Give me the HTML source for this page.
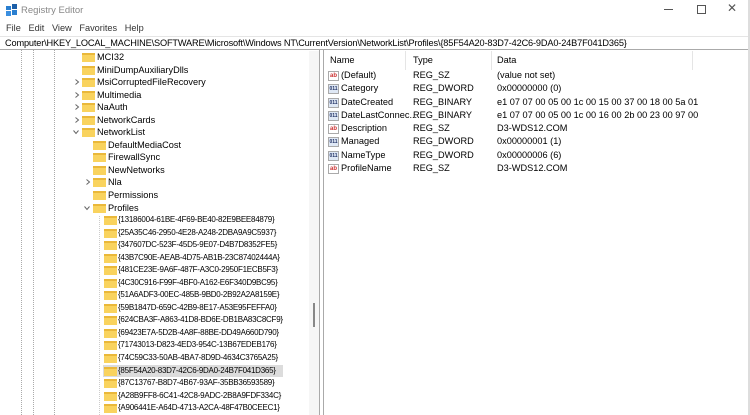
<!DOCTYPE html>
<html><head><meta charset="utf-8"><style>
*{margin:0;padding:0;box-sizing:border-box}
body{width:750px;height:415px;background:#fff;font-family:"Liberation Sans",sans-serif;font-size:9.2px;color:#000;position:relative;overflow:hidden}
.a{position:absolute;white-space:nowrap}
.r{position:absolute;height:12.5px;line-height:12.5px;white-space:nowrap}
.f{position:absolute;width:13px;height:9px;top:2px;background:#f9d35e;border-top:2px solid #eab83a}
.t{position:absolute}
.ar{position:absolute;top:3px}
.v{position:absolute;border-left:1px dotted #aaa;top:50px;height:365px}
.ic{position:absolute;width:11px;height:10px;font-size:6px;line-height:9px;text-align:center;border:1px solid #aaa;font-weight:bold}
.sz{color:#c33}.dw{color:#236;font-size:5px;background:#dfe8f5}
.g{font-size:8px;letter-spacing:-0.25px}
</style></head><body>
<div class="a" style="left:6px;top:4px;width:12px;height:12px">
<div style="position:absolute;left:0;top:2px;width:5px;height:4px;background:#2a7fd0"></div>
<div style="position:absolute;left:6px;top:0;width:5px;height:5px;background:#1c5fa8"></div>
<div style="position:absolute;left:0;top:7px;width:5px;height:5px;background:#3b8fe0"></div>
<div style="position:absolute;left:6px;top:6px;width:5px;height:5px;background:#2a7fd0"></div></div>
<div class="a" style="left:21px;top:5px;color:#888;font-size:9.5px">Registry Editor</div>
<div class="a" style="left:664px;top:9px;width:9px;border-top:1px solid #555"></div>
<div class="a" style="left:697px;top:5px;width:9px;height:9px;border:1px solid #555"></div>
<div class="a" style="left:727px;top:1px;color:#555;font-size:12px">✕</div>
<div class="a" style="left:6px;top:23px;color:#333;font-size:9.2px">File&nbsp;&nbsp;&nbsp;Edit&nbsp;&nbsp;&nbsp;View&nbsp;&nbsp;&nbsp;Favorites&nbsp;&nbsp;&nbsp;Help</div>
<div class="a" style="left:0;top:36px;width:750px;height:14px;border-top:1px solid #e5e5e5;border-bottom:1px solid #aaa"></div>
<div class="a" style="left:5px;top:38px;font-size:9.2px;letter-spacing:-0.15px">Computer\HKEY_LOCAL_MACHINE\SOFTWARE\Microsoft\Windows NT\CurrentVersion\NetworkList\Profiles\{85F54A20-83D7-42C6-9DA0-24B7F041D365}</div>
<div class="a" style="left:0;top:50px;width:320px;height:365px;border-right:1px solid #aaa"></div>
<div class="a" style="left:309px;top:51px;width:10px;height:364px;background:#f6f6f6"></div>
<div class="a" style="left:313px;top:303px;width:2px;height:24px;background:#888"></div>
<div class="a" style="left:323px;top:50px;width:427px;height:365px;border-left:1px solid #aaa;border-right:1px solid #aaa"></div>
<div class="a" style="left:748px;top:0;width:2px;height:415px;background:#ddd"></div>
<div class="v" style="left:21px"></div><div class="v" style="left:33px"></div><div class="v" style="left:54px"></div>
<div class="v" style="left:99px;top:216px;height:199px;border-color:#ccc"></div>
<div class="a" style="left:103px;top:364.5px;width:180px;height:12.5px;background:#dcdcdc"></div>

<svg width="0" height="0" style="position:absolute"><defs>
<symbol id="c" viewBox="0 0 6 6"><path d="M1.5 0.5 L4.5 3 L1.5 5.5" fill="none" stroke="#666" stroke-width="1"/></symbol>
<symbol id="d" viewBox="0 0 6 6"><path d="M0.5 1.5 L3 4.5 L5.5 1.5" fill="none" stroke="#666" stroke-width="1"/></symbol>
</defs></svg>

<div class="r" style="top:51px"><div class="f" style="left:82px"></div><div class="t" style="left:97px">MCI32</div></div>
<div class="r" style="top:63.5px"><div class="f" style="left:82px"></div><div class="t" style="left:97px">MiniDumpAuxiliaryDlls</div></div>
<div class="r" style="top:76px"><svg class="ar" style="left:74px" width="6" height="6"><use href="#c"/></svg><div class="f" style="left:82px"></div><div class="t" style="left:97px">MsiCorruptedFileRecovery</div></div>
<div class="r" style="top:88.6px"><svg class="ar" style="left:74px" width="6" height="6"><use href="#c"/></svg><div class="f" style="left:82px"></div><div class="t" style="left:97px">Multimedia</div></div>
<div class="r" style="top:101.2px"><svg class="ar" style="left:74px" width="6" height="6"><use href="#c"/></svg><div class="f" style="left:82px"></div><div class="t" style="left:97px">NaAuth</div></div>
<div class="r" style="top:113.7px"><svg class="ar" style="left:74px" width="6" height="6"><use href="#c"/></svg><div class="f" style="left:82px"></div><div class="t" style="left:97px">NetworkCards</div></div>
<div class="r" style="top:126.2px"><svg class="ar" style="left:73px" width="6" height="6"><use href="#d"/></svg><div class="f" style="left:82px"></div><div class="t" style="left:97px">NetworkList</div></div>
<div class="r" style="top:138.8px"><div class="f" style="left:93px"></div><div class="t" style="left:108px">DefaultMediaCost</div></div>
<div class="r" style="top:151.3px"><div class="f" style="left:93px"></div><div class="t" style="left:108px">FirewallSync</div></div>
<div class="r" style="top:163.9px"><div class="f" style="left:93px"></div><div class="t" style="left:108px">NewNetworks</div></div>
<div class="r" style="top:176.4px"><svg class="ar" style="left:85px" width="6" height="6"><use href="#c"/></svg><div class="f" style="left:93px"></div><div class="t" style="left:108px">Nla</div></div>
<div class="r" style="top:189px"><div class="f" style="left:93px"></div><div class="t" style="left:108px">Permissions</div></div>
<div class="r" style="top:201.5px"><svg class="ar" style="left:84px" width="6" height="6"><use href="#d"/></svg><div class="f" style="left:93px"></div><div class="t" style="left:108px">Profiles</div></div>
<div class="g">
<div class="r" style="top:214px"><div class="f" style="left:104px"></div><div class="t" style="left:118px">{13186004-61BE-4F69-BE40-82E9BEE84879}</div></div>
<div class="r" style="top:226.6px"><div class="f" style="left:104px"></div><div class="t" style="left:118px">{25A35C46-2950-4E28-A248-2DBA9A9C5937}</div></div>
<div class="r" style="top:239.1px"><div class="f" style="left:104px"></div><div class="t" style="left:118px">{347607DC-523F-45D5-9E07-D4B7D8352FE5}</div></div>
<div class="r" style="top:251.6px"><div class="f" style="left:104px"></div><div class="t" style="left:118px">{43B7C90E-AEAB-4D75-AB1B-23C87402444A}</div></div>
<div class="r" style="top:264.2px"><div class="f" style="left:104px"></div><div class="t" style="left:118px">{481CE23E-9A6F-487F-A3C0-2950F1ECB5F3}</div></div>
<div class="r" style="top:276.7px"><div class="f" style="left:104px"></div><div class="t" style="left:118px">{4C30C916-F99F-4BF0-A162-E6F340D9BC95}</div></div>
<div class="r" style="top:289.3px"><div class="f" style="left:104px"></div><div class="t" style="left:118px">{51A6ADF3-00EC-485B-9BD0-2B92A2A8159E}</div></div>
<div class="r" style="top:301.8px"><div class="f" style="left:104px"></div><div class="t" style="left:118px">{59B1847D-659C-42B9-8E17-A53E95FEFFA0}</div></div>
<div class="r" style="top:314.4px"><div class="f" style="left:104px"></div><div class="t" style="left:118px">{624CBA3F-A863-41D8-BD6E-DB1BA83C8CF9}</div></div>
<div class="r" style="top:326.9px"><div class="f" style="left:104px"></div><div class="t" style="left:118px">{69423E7A-5D2B-4A8F-88BE-DD49A660D790}</div></div>
<div class="r" style="top:339.4px"><div class="f" style="left:104px"></div><div class="t" style="left:118px">{71743013-D823-4ED3-954C-13B67EDEB176}</div></div>
<div class="r" style="top:352px"><div class="f" style="left:104px"></div><div class="t" style="left:118px">{74C59C33-50AB-4BA7-8D9D-4634C3765A25}</div></div>
<div class="r" style="top:364.5px"><div class="f" style="left:104px"></div><div class="t" style="left:118px">{85F54A20-83D7-42C6-9DA0-24B7F041D365}</div></div>
<div class="r" style="top:377.1px"><div class="f" style="left:104px"></div><div class="t" style="left:118px">{87C13767-B8D7-4B67-93AF-35BB36593589}</div></div>
<div class="r" style="top:389.6px"><div class="f" style="left:104px"></div><div class="t" style="left:118px">{A28B9FF8-6C41-42C8-9ADC-2B8A9FDF334C}</div></div>
<div class="r" style="top:402.2px"><div class="f" style="left:104px"></div><div class="t" style="left:118px">{A906441E-A64D-4713-A2CA-48F47B0CEEC1}</div></div>
</div>

<div class="a" style="left:405px;top:51px;height:19px;border-left:1px solid #e5e5e5"></div>
<div class="a" style="left:491px;top:51px;height:19px;border-left:1px solid #e5e5e5"></div>
<div class="a" style="left:692px;top:51px;height:19px;border-left:1px solid #e5e5e5"></div>
<div class="a" style="left:330px;top:55px">Name</div>
<div class="a" style="left:413px;top:55px">Type</div>
<div class="a" style="left:497px;top:55px">Data</div>

<div class="a" style="left:328px;top:69px;line-height:13.3px">
<div style="position:relative;height:13.3px"><span class="ic sz" style="left:0;top:2px">ab</span><span style="position:absolute;left:13px">(Default)</span><span style="position:absolute;left:85px">REG_SZ</span><span style="position:absolute;left:169px">(value not set)</span></div>
<div style="position:relative;height:13.3px"><span class="ic dw" style="left:0;top:2px">011</span><span style="position:absolute;left:13px">Category</span><span style="position:absolute;left:85px">REG_DWORD</span><span style="position:absolute;left:169px">0x00000000 (0)</span></div>
<div style="position:relative;height:13.3px"><span class="ic dw" style="left:0;top:2px">011</span><span style="position:absolute;left:13px">DateCreated</span><span style="position:absolute;left:85px">REG_BINARY</span><span style="position:absolute;left:169px">e1 07 07 00 05 00 1c 00 15 00 37 00 18 00 5a 01</span></div>
<div style="position:relative;height:13.3px"><span class="ic dw" style="left:0;top:2px">011</span><span style="position:absolute;left:13px">DateLastConnec...</span><span style="position:absolute;left:85px">REG_BINARY</span><span style="position:absolute;left:169px">e1 07 07 00 05 00 1c 00 16 00 2b 00 23 00 97 00</span></div>
<div style="position:relative;height:13.3px"><span class="ic sz" style="left:0;top:2px">ab</span><span style="position:absolute;left:13px">Description</span><span style="position:absolute;left:85px">REG_SZ</span><span style="position:absolute;left:169px">D3-WDS12.COM</span></div>
<div style="position:relative;height:13.3px"><span class="ic dw" style="left:0;top:2px">011</span><span style="position:absolute;left:13px">Managed</span><span style="position:absolute;left:85px">REG_DWORD</span><span style="position:absolute;left:169px">0x00000001 (1)</span></div>
<div style="position:relative;height:13.3px"><span class="ic dw" style="left:0;top:2px">011</span><span style="position:absolute;left:13px">NameType</span><span style="position:absolute;left:85px">REG_DWORD</span><span style="position:absolute;left:169px">0x00000006 (6)</span></div>
<div style="position:relative;height:13.3px"><span class="ic sz" style="left:0;top:2px">ab</span><span style="position:absolute;left:13px">ProfileName</span><span style="position:absolute;left:85px">REG_SZ</span><span style="position:absolute;left:169px">D3-WDS12.COM</span></div>
</div>
</body></html>
